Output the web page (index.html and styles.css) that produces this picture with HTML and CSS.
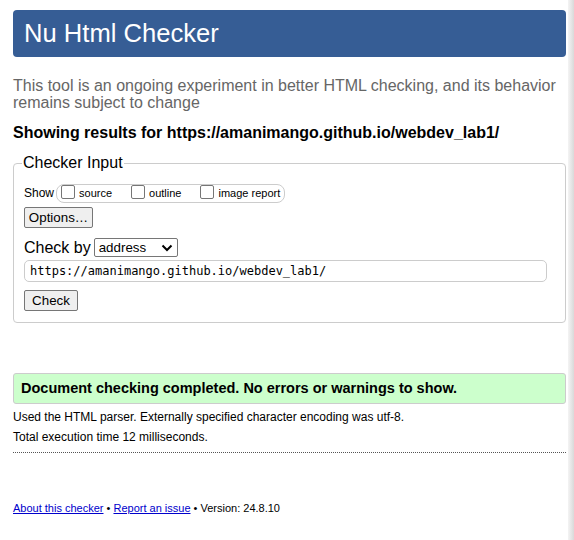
FILE: index.html
```html
<!DOCTYPE html>
<html lang="en">
<head>
<meta charset="utf-8">
<title>Nu Html Checker</title>
<link rel="stylesheet" href="styles.css">
</head>
<body>
<div class="page">
  <h1 class="banner">Nu Html Checker</h1>
  <p class="intro">This tool is an ongoing experiment in better HTML checking, and its behavior remains subject to change</p>
  <p class="showing">Showing results for https://amanimango.github.io/webdev_lab1/</p>
  <fieldset class="input">
    <legend>Checker Input</legend>
    <div class="show-row">
      <span class="show-label">Show</span>
      <span class="show-box">
        <label class="opt"><span class="cb"></span>source</label>
        <label class="opt"><span class="cb"></span>outline</label>
        <label class="opt"><span class="cb"></span>image report</label>
      </span>
    </div>
    <div class="row"><button class="btn btn-options">Options…</button></div>
    <div class="checkby">
      <span class="checkby-label">Check by</span>
      <span class="select">address
        <svg class="chev" width="12" height="8" viewBox="0 0 12 8"><path d="M1.5 1.5 L6 6 L10.5 1.5" fill="none" stroke="#000" stroke-width="2"/></svg>
      </span>
    </div>
    <div class="url">https://amanimango.github.io/webdev_lab1/</div>
    <div class="row"><button class="btn btn-check">Check</button></div>
  </fieldset>
  <div class="success">Document checking completed. No errors or warnings to show.</div>
  <p class="info first">Used the HTML parser. Externally specified character encoding was utf-8.</p>
  <p class="info">Total execution time 12 milliseconds.</p>
  <hr class="dots">
  <p class="footer"><a href="#">About this checker</a> • <a href="#">Report an issue</a> • Version: 24.8.10</p>
</div>
<div class="edge"></div>
</body>
</html>
```
FILE: styles.css
```css
html, body {
  margin: 0;
  padding: 0;
  background: #fff;
}
body {
  font-family: "Liberation Sans", Arial, sans-serif;
  color: #000;
}
.page {
  padding: 10px 8px 0 13px;
  width: 553px;
}
.banner {
  margin: 0;
  height: 47px;
  background: #365d95;
  color: #fff;
  border-radius: 4px;
  font-size: 25.6px;
  font-weight: normal;
  line-height: 47px;
  padding-left: 11px;
}
.intro {
  margin: 20px 0 0;
  font-size: 16px;
  line-height: 17px;
  color: #666;
}
.showing {
  margin: 13px 0 0;
  font-size: 16px;
  font-weight: bold;
  line-height: 18px;
}
.input {
  margin: 12px 0 0;
  padding: 0 10px 11px 10px;
  border: 1px solid #ccc;
  border-radius: 4px;
  min-width: 0;
}
.input legend {
  font-size: 16px;
  padding: 0 1px;
  margin-left: -2px;
  line-height: 18px;
}
.show-row {
  display: flex;
  align-items: center;
  font-size: 12px;
  margin-top: 11px;
  height: 20px;
}
.show-label {
  margin-right: 2px;
}
.show-box {
  display: flex;
  align-items: center;
  white-space: nowrap;
  border: 1px solid #ccc;
  border-radius: 8px;
  height: 17px;
  padding: 0 4px 0 4px;
  font-size: 11px;
}
.opt {
  display: flex;
  align-items: center;
  white-space: nowrap;
  flex-shrink: 0;
  margin-right: 19px;
}
.opt:last-child { margin-right: 0; }
.cb {
  width: 12px;
  height: 12px;
  border: 1px solid #767676;
  border-radius: 2px;
  margin-right: 4px;
  margin-top: -3px;
  background: #fff;
}
.row {
  display: flex;
}
.btn {
  font-family: "Liberation Sans", Arial, sans-serif;
  font-size: 13.33px;
  background: #efefef;
  border: 1px solid #767676;
  border-radius: 2px;
  padding: 0 3px;
  height: 21px;
  line-height: 19px;
  color: #000;
  margin: 0;
}
.btn-options {
  margin-top: 4px;
  width: 69px;
}
.btn-check {
  margin-top: 8px;
  width: 54px;
}
.checkby {
  display: flex;
  align-items: center;
  margin-top: 10px;
  height: 19px;
}
.checkby-label {
  font-size: 16px;
  margin-right: 3px;
}
.select {
  display: flex;
  align-items: center;
  justify-content: space-between;
  box-sizing: border-box;
  width: 84px;
  height: 19px;
  border: 1px solid #767676;
  border-radius: 2px;
  font-size: 13.33px;
  padding: 0 4px 0 4px;
}
.chev { display: block; }
.url {
  margin-top: 3px;
  box-sizing: border-box;
  width: 523px;
  height: 22px;
  border: 1px solid #ccc;
  border-radius: 5px;
  font-family: "DejaVu Sans Mono", "Liberation Mono", monospace;
  font-size: 12px;
  line-height: 20px;
  padding-left: 5px;
}
.success {
  margin-top: 50px;
  box-sizing: border-box;
  height: 31px;
  background: #ccffcc;
  border: 1px solid #ccc;
  border-radius: 3px;
  font-weight: bold;
  font-size: 14.5px;
  line-height: 29px;
  padding-left: 7px;
}
.info {
  margin: 0;
  font-size: 12px;
  line-height: 20px;
}
.info.first { margin-top: 3px; }
.dots {
  margin: 5px 0 0;
  border: 0;
  border-top: 1px dotted #555;
  height: 0;
}
.footer {
  margin: 48px 0 0;
  font-size: 11px;
  line-height: 14px;
}
.footer a {
  color: #00c;
}
.edge {
  position: fixed;
  top: 0;
  right: 0;
  width: 6px;
  height: 100%;
  background: linear-gradient(to right, #f4f4f4, #d9d9d9);
}
```
